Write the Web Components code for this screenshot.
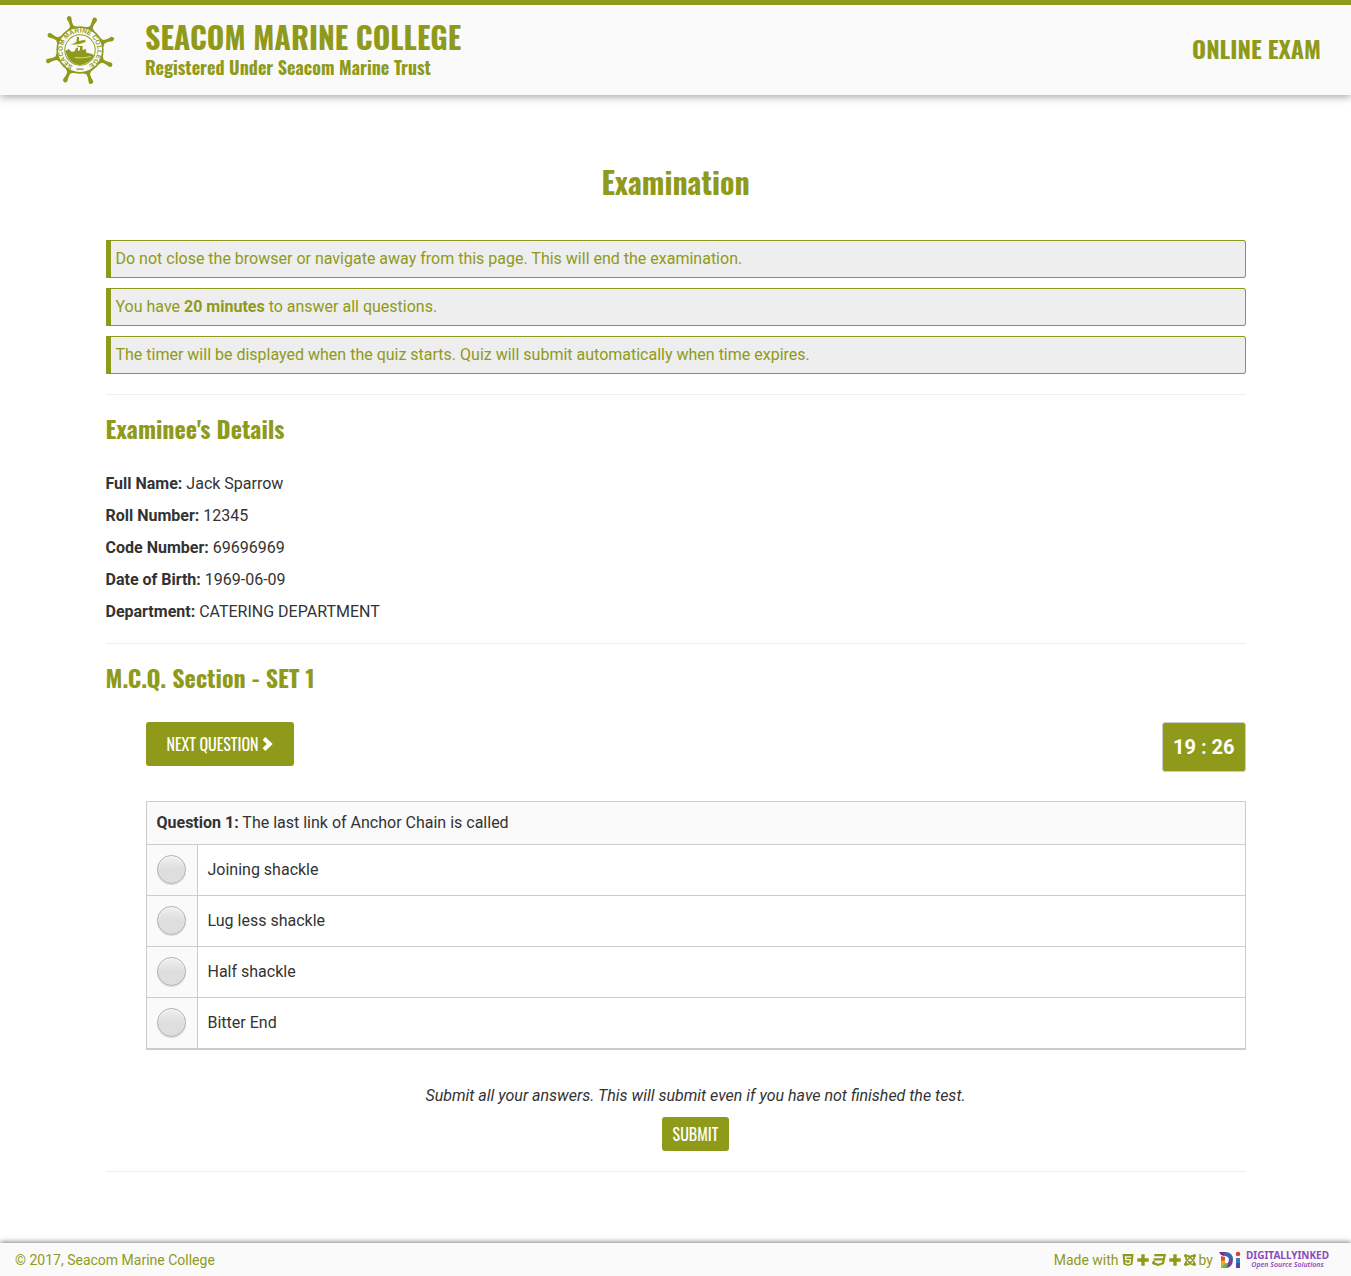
<!DOCTYPE html>
<html lang="en">
<head>
<meta charset="utf-8">
<meta name="viewport" content="width=device-width, initial-scale=1">
<title>Online Exam - Seacom Marine College</title>
<style>
:root{--brand:#8f9a1a;--panel:#fafafa;--line:#ccc;--display:"Oswald","Liberation Sans Narrow",sans-serif}
*{box-sizing:border-box}
body{margin:0;background:#fff;color:#333;font:16px/24px Roboto,sans-serif}
</style>
</head>
<body>
<exam-app></exam-app>
<script>
const define = (name, html, setup) => customElements.define(name, class extends HTMLElement {
  constructor() {
    super();
    const t = document.createElement('template');
    t.innerHTML = '<style>*{box-sizing:border-box}:host{display:block}</style>' + html;
    this.attachShadow({mode: 'open'}).append(t.content.cloneNode(true));
    if (setup) setup(this.shadowRoot, this);
  }
});

// Ship's wheel crest with the college name round the rim
define('college-crest', `
<style>:host{flex:none;width:70px;height:70px}svg{display:block;width:100%;height:100%}</style>
<svg viewBox="-34.500 -34.500 69 69" role="img" aria-label="Seacom Marine College crest" fill="#8f9a1a">
  <g id="spokes"></g>
  <circle r="22.5" fill="#fafafa" stroke="#8f9a1a" stroke-width="1.6"/>
  <circle r="15" fill="#fafafa" stroke="#8f9a1a" stroke-width="1"/>
  <path id="rim" d="M-6 16A17.100 17.100 0 1 1 6 16" fill="none"/>
  <text font-family="Liberation Sans,sans-serif" font-size="6.6" font-weight="700"><textPath href="#rim" startOffset="1">SEACOM MARINE COLLEGE</textPath></text>
  <path d="M-3.500 18.900H3.500" stroke="#8f9a1a" stroke-width="1.300"/>
  <path d="M-9-5.500Q-5-7-3.500-8L-3-13-1-12.500-1-8.800 5-10 5.500-8Q0-5.500-9-5.500ZM-3-4.500 4-3.500-2-3Z"/>
  <path d="M-14.500 1L-11-1-8 2-5 1-4-2-2-2.500V1L0 0V-4H2.500V0L6-1V2.500L12 4 14 5.500Q9 14 0 14.800-11 14-14.500 1Z"/>
  <path d="M-5 7.500Q2 8.500 11 6.500" fill="none" stroke="#fafafa" stroke-width=".6"/>
</svg>`, root => {
  const ns = 'http://www.w3.org/2000/svg', g = root.getElementById('spokes');
  for (let i = 0; i < 8; i++) {
    const s = document.createElementNS(ns, 'g');
    s.setAttribute('transform', `rotate(${i * 45 + 26})`);
    s.innerHTML = '<path d="M-6-21.500L-1.800-25-1.100-30H1.100L1.800-25 6-21.500Z"/><path d="M-1-26L-2.300-33A2.300 2.300 0 0 1 2.300-33L1-26Z"/>';
    g.append(s);
  }
});

define('site-header', `
<style>
:host{background:var(--panel);border-top:5px solid var(--brand);box-shadow:0 2px 8px rgba(0,0,0,.35);color:var(--brand);font-family:var(--display)}
header{display:flex;align-items:center;height:90px;padding:0 30px 0 45px}
.name{flex:1;padding-left:30px}
h1,h2,p{margin:0;font-weight:700}
h1{font-size:30px;line-height:34px}
p{font-size:18px;line-height:26px}
h2{font-size:24px;line-height:28px;padding-bottom:4px}
</style>
<header><college-crest></college-crest>
<div class="name"><h1>SEACOM MARINE COLLEGE</h1><p>Registered Under Seacom Marine Trust</p></div>
<h2>ONLINE EXAM</h2></header>`);

define('exam-notice', `
<style>:host{border:1px solid var(--brand);border-left-width:5px;border-radius:0 3px 3px 0;background:#eee;color:var(--brand);padding:6px 5px;margin-bottom:10px}</style><slot></slot>`);

define('detail-row', `
<style>:host{line-height:23px;margin-bottom:9px}</style><strong><slot name="label"></slot></strong> <slot></slot>`);

define('exam-section', `
<style>
:host{border-top:1px solid #eee;margin-top:20px;padding-top:20px}
h3{margin:0 0 31px;font:700 24px/26px var(--display);color:var(--brand)}
</style><h3><slot name="title"></slot></h3><slot></slot>`);

define('exam-button', `
<style>
:host{display:inline-block}
button{display:flex;align-items:center;gap:3px;border:0;border-radius:3px;background:var(--brand);color:#fff;font:16px/24px var(--display);padding:5px 11px;cursor:pointer}
:host([large]) button{padding:10px 21px}
</style><button type="button"><slot></slot></button>`);

define('exam-timer', `
<style>:host{border:1px solid var(--line);border-radius:3px;background:var(--brand);color:#fff;font-size:20px;font-weight:700;line-height:28px;padding:10px}</style><slot></slot>`);

define('question-card', `
<style>
table{width:100%;border-collapse:collapse;border:1px solid var(--line);border-bottom-width:2px}
th,td{border:1px solid var(--line);padding:10px;text-align:left;font-weight:400}
th{background:var(--panel);line-height:22px}
td:first-child{width:51px;background:var(--panel)}
input{appearance:none;display:block;width:29px;height:29px;margin:0 0 1px;border:1px solid #b0b0b0;border-radius:50%;background:linear-gradient(#efefef,#dedede 50%,#dedede);box-shadow:0 1px 1px rgba(0,0,0,.12),inset 0 1px 1px #fff}
input:checked{background:radial-gradient(circle,var(--brand) 35%,#dedede 40%)}
label{display:block}
</style>
<table><thead><tr><th colspan="2"><strong>Question 1:</strong> <slot></slot></th></tr></thead><tbody></tbody></table>`, (root, host) => {
  const body = root.querySelector('tbody');
  ['Joining shackle', 'Lug less shackle', 'Half shackle', 'Bitter End'].forEach((text, i) => {
    body.insertAdjacentHTML('beforeend', `<tr><td><input type="radio" name="answer" id="a${i}"></td><td><label for="a${i}">${text}</label></td></tr>`);
  });
});

define('inked-logo', `
<style>
:host{display:block}
a{display:flex;align-items:center;gap:3px;color:#8a4bc0;text-decoration:none;font-family:"Noto Sans",sans-serif}
svg{display:block;width:22px;height:18px}
span{display:flex;flex-direction:column;align-items:center;width:87px}
b{font-size:10px;line-height:10px}
i{font-size:7px;line-height:10px;font-weight:600}
</style>
<a href="#"><svg viewBox="0 0 22 18" aria-hidden="true">
<path d="M0 1H7L5 5 2 4Z" fill="#7c2f8e"/><path d="M6 1Q14 1 14 9L10 9Q10 5 5 5Z" fill="#3567b1"/>
<path d="M14 8Q14 17 6 17L6 13Q10 13 10 8Z" fill="#7a3f94"/><path d="M2 5L6 6V10L2 12Z" fill="#e3493b"/>
<path d="M2 10L6 9V14L2 17Z" fill="#f1a72d"/><path d="M2 17L6 12 9 13 7 17Z" fill="#73b446"/>
<circle cx="19" cy="3" r="2.300" fill="#d9413e"/><path d="M17 7H21V12H17Z" fill="#3979c4"/><path d="M17 12H21V17H17Z" fill="#60479d"/></svg>
<span><b>DIGITALLYINKED</b><i>Open Source Solutions</i></span></a>`);

define('site-footer', `
<style>
:host{background:var(--panel);box-shadow:0 -1px 5px rgba(0,0,0,.5);color:var(--brand);font-size:14px;line-height:20px}
footer{display:flex;justify-content:space-between;align-items:center;height:33px;padding:0 20px 0 15px}
.made{display:flex;align-items:center;gap:3px}
svg{display:block;height:12px;fill:currentColor}
inked-logo{margin-left:3px}
</style>
<footer><span>© 2017, Seacom Marine College</span>
<div class="made"><span>Made with</span>
<svg width="12" viewBox="0 0 11 12" aria-label="HTML5"><path fill-rule="evenodd" d="M0 0H11L10 10.500 5.500 12 1 10.500ZM2.300 2.200L2.700 6.300H7.200L7 8.500 5.500 9 4 8.500V7.500H2.700L2.900 9.500 5.500 10.400 8.200 9.500 8.600 5H4L3.900 3.600H8.700L8.800 2.200Z"/></svg>
<svg width="12" viewBox="0 0 12 12" aria-hidden="true"><path d="M4.300.300H7.700V4.300H11.700V7.700H7.700V11.700H4.300V7.700H.300V4.300H4.300Z"/></svg>
<svg width="14" viewBox="0 0 14 12" aria-label="CSS3"><path d="M2.500 0H14L12 10 6 12 0 10 .600 7H3L2.800 8.500 6.400 9.700 10 8.500 10.500 6.500H1.300L1.800 4.200H11L11.400 2.300H2Z"/></svg>
<svg width="12" viewBox="0 0 12 12" aria-hidden="true"><path d="M4.300.300H7.700V4.300H11.700V7.700H7.700V11.700H4.300V7.700H.300V4.300H4.300Z"/></svg>
<svg width="12" viewBox="0 0 12 12" aria-label="Joomla"><g fill="none" stroke="currentColor" stroke-width="1.700"><path d="M2 2.500Q4 1 6 3L10 7.500V10M10 2.500Q8 1 6 3L2 7.500V10M2 2V5L6.500 9.500Q8 11 10 10M10 2V5L5.500 9.500Q4 11 2 10"/></g><circle cx="1.700" cy="1.700" r="1.700"/><circle cx="10.300" cy="1.700" r="1.700"/><circle cx="1.700" cy="10.300" r="1.700"/><circle cx="10.300" cy="10.300" r="1.700"/></svg>
<span>by</span><inked-logo></inked-logo></div></footer>`);

define('exam-app', `
<style>
:host{display:flex;flex-direction:column;min-height:100vh}
main{flex:1;width:100%;max-width:1140px;margin:0 auto;padding:66px 0 70px}
h2{margin:0 0 38px;text-align:center;font:700 30px/41px var(--display);color:var(--brand)}
.quiz{padding-left:40px}
.bar{display:flex;justify-content:space-between;align-items:flex-start;margin:32px 0 29px}
.bar svg{display:block;width:11px;height:16px}
.finish{display:flex;flex-direction:column;align-items:center;gap:9px;margin-top:34px}
.finish p{margin:0;font-style:italic;text-align:center}
.end{width:100%;height:1px;border:0;margin:20px 0 0;background:#eee}
</style>
<site-header></site-header>
<main>
<h2>Examination</h2>
<exam-notice>Do not close the browser or navigate away from this page. This will end the examination.</exam-notice>
<exam-notice>You have <strong>20 minutes</strong> to answer all questions.</exam-notice>
<exam-notice>The timer will be displayed when the quiz starts. Quiz will submit automatically when time expires.</exam-notice>
<exam-section><span slot="title">Examinee's Details</span>
<detail-row><span slot="label">Full Name:</span>Jack Sparrow</detail-row>
<detail-row><span slot="label">Roll Number:</span>12345</detail-row>
<detail-row><span slot="label">Code Number:</span>69696969</detail-row>
<detail-row><span slot="label">Date of Birth:</span>1969-06-09</detail-row>
<detail-row><span slot="label">Department:</span>CATERING DEPARTMENT</detail-row>
</exam-section>
<exam-section><span slot="title">M.C.Q. Section - SET 1</span>
<div class="quiz">
<div class="bar"><exam-button large>NEXT QUESTION <svg viewBox="0 0 11 16" aria-hidden="true"><path d="M2 2.500L7.800 8 2 13.500" fill="none" stroke="#fff" stroke-width="4"/></svg></exam-button><exam-timer>19 : 26</exam-timer></div>
<question-card>The last link of Anchor Chain is called</question-card>
<div class="finish"><p>Submit all your answers. This will submit even if you have not finished the test.</p><exam-button>SUBMIT</exam-button></div>
</div>
</exam-section>
<hr class="end">
</main>
<site-footer></site-footer>`);
</script>
</body>
</html>
